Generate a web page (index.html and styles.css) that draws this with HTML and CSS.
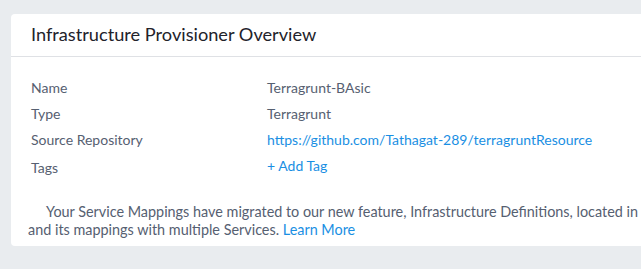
FILE: index.html
```html
<!DOCTYPE html>
<html lang="en">
<head>
  <meta charset="UTF-8" />
  <title>Infrastructure Provisioner Overview</title>
  <link rel="stylesheet" href="styles.css">
</head>
<body>

<div class="card">
  <div class="card-header">
    <h2 class="card-title">Infrastructure Provisioner Overview</h2>
  </div>

  <div class="card-body">
    <div class="details">
      <div class="label">Name</div>
      <div class="value">Terragrunt-BAsic</div>

      <div class="label">Type</div>
      <div class="value">Terragrunt</div>

      <div class="label">Source Repository</div>
      <div class="value"><a href="#" class="link">https://github.com/Tathagat-289/terragruntResource</a></div>

      <div class="label tags-label">Tags</div>
      <div class="value"><a href="#" class="link">+ Add Tag</a></div>
    </div>

    <p class="notice">
      Your Service Mappings have migrated to our new feature, Infrastructure Definitions, located in the Environments section. Define the target infrastructure once<br>and its mappings with multiple Services. <a href="#" class="link">Learn More</a>
    </p>
  </div>
</div>

</body>
</html>
```

FILE: styles.css
```css
body {
  font-family: Lato, 'Open Sans', sans-serif;
  background-color: #e9ecef;
  margin: 0;
  padding: 14px 0 0 11px;
  overflow: hidden;
}

.card {
  background-color: #fff;
  border-radius: 4px;
  width: 1100px;
  padding-bottom: 7px;
}

.card-header {
  border-bottom: 1px solid #dfe1e5;
  display: flex;
  align-items: center;
  padding: 0 0 3px 20px;
  box-sizing: border-box;
  height: 43px;
}

.card-title {
  margin: 0;
  font-size: 18.2px;
  font-weight: normal;
  color: #22222a;
}

.card-body {
  padding-top: 17px;
}

.details {
  display: grid;
  grid-template-columns: 236px 1fr;
  grid-auto-rows: 26px;
  align-items: center;
  padding-left: 20px;
  font-size: 14px;
}

.label {
  color: #566071;
}

.tags-label {
  padding-top: 4px;
}

.value {
  color: #566071;
}

.link {
  color: #1a8fe3;
  text-decoration: none;
}

.notice {
  margin: 25px 0 0;
  padding-left: 17px;
  text-indent: 18px;
  font-size: 14.4px;
  line-height: 18px;
  color: #566071;
  white-space: nowrap;
}
```
